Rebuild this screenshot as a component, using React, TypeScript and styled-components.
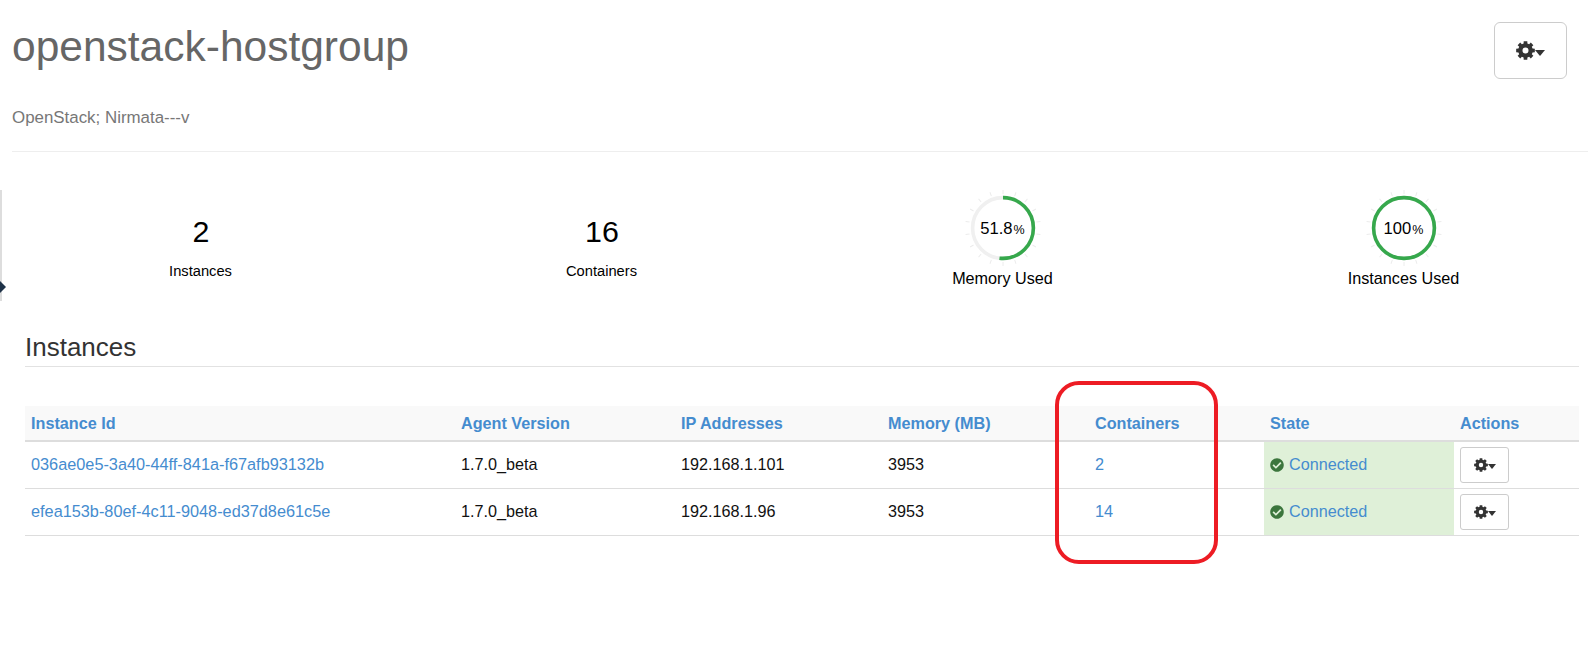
import styled, { createGlobalStyle } from "styled-components";
import { FaCheckCircle } from "react-icons/fa";

const GlobalStyle = createGlobalStyle`
  html, body {
    margin: 0;
    padding: 0;
    background: #fff;
  }
  body {
    font-family: "Liberation Sans", Arial, sans-serif;
    font-size: 16px;
    color: #000;
  }
  * {
    box-sizing: border-box;
  }
`;

const Page = styled.div`
  position: relative;
  width: 1588px;
  height: 648px;
  overflow: hidden;
`;

const Header = styled.header`
  margin-left: 12px;
  padding: 22px 21px 0 0;
  height: 152px;
  border-bottom: 1px solid #eee;
  display: flex;
  justify-content: space-between;
  align-items: flex-start;
`;

const Title = styled.h1`
  margin: 0;
  font-size: 42.5px;
  line-height: 50px;
  font-weight: 400;
  color: #666;
`;

const Subtitle = styled.p`
  margin: 36px 0 0;
  font-size: 16.9px;
  line-height: 20px;
  color: #777;
`;

const GearButton = styled.button<{ $large?: boolean }>`
  display: flex;
  align-items: center;
  justify-content: center;
  width: ${(p) => (p.$large ? "73px" : "49px")};
  height: ${(p) => (p.$large ? "57px" : "36px")};
  padding: 0;
  background: #fff;
  border: 1px solid #ccc;
  border-radius: ${(p) => (p.$large ? "6px" : "3px")};
  color: #333;
`;

const Caret = styled.span<{ $large?: boolean }>`
  width: 0;
  height: 0;
  margin-top: ${(p) => (p.$large ? "5px" : "3px")};
  border-style: solid;
  border-color: #333 transparent transparent;
  border-width: ${(p) => (p.$large ? "6px 5.5px 0" : "5px 4.5px 0")};
`;

const Stats = styled.section`
  display: grid;
  grid-template-columns: repeat(4, 401px);
  height: 170px;
`;

const Stat = styled.div`
  display: flex;
  flex-direction: column;
  align-items: center;
`;

const StatValue = styled.div`
  margin-top: 61px;
  padding-left: 1px;
  font-size: 30.4px;
  line-height: 36px;
`;

const StatLabel = styled.div`
  margin-top: 13px;
  font-size: 14.7px;
  line-height: 18px;
`;

const GaugeBox = styled.div`
  position: relative;
  margin-top: 36px;
  width: 80px;
  height: 80px;
`;

const GaugeText = styled.div`
  position: absolute;
  inset: 1px 0 0;
  display: flex;
  align-items: center;
  justify-content: center;
  font-size: 16.6px;

  small {
    font-size: 12.5px;
    margin-left: 1px;
    margin-top: 2px;
  }
`;

const GaugeLabel = styled.div`
  margin-top: 1px;
  font-size: 16.2px;
  line-height: 18px;
`;

const Instances = styled.section`
  margin: 0 9px 0 25px;
`;

const SectionTitle = styled.h2`
  margin: 0;
  height: 45px;
  padding-top: 10px;
  border-bottom: 1px solid #e2e2e2;
  font-size: 26px;
  line-height: 30px;
  font-weight: 400;
  color: #333;
`;

const Table = styled.table`
  margin-top: 39px;
  width: 100%;
  table-layout: fixed;
  border-collapse: collapse;
`;

const HeadCell = styled.th`
  height: 35px;
  padding: 0 6px;
  text-align: left;
  background: #f9f9f9;
  border-bottom: 2px solid #ddd;
  color: #458ccf;
  font-size: 16.2px;
  font-weight: 700;
`;

const Cell = styled.td<{ $state?: boolean }>`
  height: 47px;
  padding: 0 6px;
  border-bottom: 1px solid #ddd;
  background: ${(p) => (p.$state ? "#dff0d8" : "transparent")};
  font-size: 16.2px;
  color: #111;
`;

const CellLink = styled.a`
  color: #458ccf;
  font-size: 16.3px;
  text-decoration: none;
`;

const StateLabel = styled.span`
  display: flex;
  align-items: center;
  gap: 5px;
  color: #458ccf;

  svg {
    color: #3c763d;
    font-size: 14px;
  }
`;

const Highlight = styled.div`
  position: absolute;
  left: 1055px;
  top: 381px;
  width: 163px;
  height: 183px;
  border: 4.5px solid #ed1c24;
  border-radius: 24px;
  pointer-events: none;
`;

const SideEdge = styled.div`
  position: absolute;
  left: 0;
  top: 190px;
  width: 1.5px;
  height: 111px;
  background: #ddd;
`;

const SideArrow = styled.div`
  position: absolute;
  left: -6px;
  top: 281px;
  width: 12px;
  height: 12px;
  background: #1f3248;
  clip-path: polygon(50% 0, 100% 50%, 50% 100%, 0 50%);
`;

// eight-tooth cog, same shape as the font icon in the original
const cogPath = (() => {
  const point = (radius: number, deg: number) => {
    const a = (deg * Math.PI) / 180;
    return `${(12 + radius * Math.cos(a)).toFixed(2)} ${(12 + radius * Math.sin(a)).toFixed(2)}`;
  };
  const parts: string[] = [];
  for (let i = 0; i < 8; i++) {
    const c = i * 45 - 90;
    parts.push(
      `${i === 0 ? "M" : "L"}${point(9.2, c - 15)}`,
      `L${point(12, c - 11)}`,
      `L${point(12, c + 11)}`,
      `L${point(9.2, c + 15)}`
    );
  }
  return `${parts.join(" ")} Z M12 8.2 A3.8 3.8 0 1 0 12 15.8 A3.8 3.8 0 1 0 12 8.2 Z`;
})();

const Cog = ({ size }: { size: number }) => (
  <svg width={size} height={size} viewBox="0 0 24 24">
    <path d={cogPath} fill="#333" fillRule="evenodd" />
  </svg>
);

const Gauge = ({ percent }: { percent: number }) => {
  const r = 30.4;
  const circumference = 2 * Math.PI * r;
  const ticks = Array.from({ length: 18 }, (_, i) => i * 20);
  return (
    <svg width="80" height="80" viewBox="0 0 80 80">
      {ticks.map((angle) => (
        <line
          key={angle}
          x1="40"
          y1="2"
          x2="40"
          y2="6"
          stroke="#ececec"
          strokeWidth="1"
          transform={`rotate(${angle} 40 40)`}
        />
      ))}
      <circle cx="40" cy="40" r={r} fill="none" stroke="#f0f0f0" strokeWidth="3.6" />
      <circle
        cx="40"
        cy="40"
        r={r}
        fill="none"
        stroke="#36a84c"
        strokeWidth="3.6"
        strokeDasharray={`${(circumference * percent) / 100} ${circumference}`}
        transform="rotate(-90 40 40)"
      />
    </svg>
  );
};

const rows = [
  { id: "036ae0e5-3a40-44ff-841a-f67afb93132b", ip: "192.168.1.101", containers: 2 },
  { id: "efea153b-80ef-4c11-9048-ed37d8e61c5e", ip: "192.168.1.96", containers: 14 },
];

const columnWidths = [430, 220, 207, 207, 175, 190, 125];
const columns = ["Instance Id", "Agent Version", "IP Addresses", "Memory (MB)", "Containers", "State", "Actions"];

export default function App() {
  return (
    <Page>
      <GlobalStyle />
      <Header>
        <div>
          <Title>openstack-hostgroup</Title>
          <Subtitle>OpenStack; Nirmata---v</Subtitle>
        </div>
        <GearButton $large>
          <Cog size={19} />
          <Caret $large />
        </GearButton>
      </Header>

      <Stats>
        <Stat>
          <StatValue>2</StatValue>
          <StatLabel>Instances</StatLabel>
        </Stat>
        <Stat>
          <StatValue>16</StatValue>
          <StatLabel>Containers</StatLabel>
        </Stat>
        <Stat>
          <GaugeBox>
            <Gauge percent={51.8} />
            <GaugeText>
              51.8<small>%</small>
            </GaugeText>
          </GaugeBox>
          <GaugeLabel>Memory Used</GaugeLabel>
        </Stat>
        <Stat>
          <GaugeBox>
            <Gauge percent={100} />
            <GaugeText>
              100<small>%</small>
            </GaugeText>
          </GaugeBox>
          <GaugeLabel>Instances Used</GaugeLabel>
        </Stat>
      </Stats>

      <Instances>
        <SectionTitle>Instances</SectionTitle>
        <Table>
          <colgroup>
            {columnWidths.map((w, i) => (
              <col key={i} width={w} />
            ))}
          </colgroup>
          <thead>
            <tr>
              {columns.map((c) => (
                <HeadCell key={c}>{c}</HeadCell>
              ))}
            </tr>
          </thead>
          <tbody>
            {rows.map((row) => (
              <tr key={row.id}>
                <Cell>
                  <CellLink>{row.id}</CellLink>
                </Cell>
                <Cell>1.7.0_beta</Cell>
                <Cell>{row.ip}</Cell>
                <Cell>3953</Cell>
                <Cell>
                  <CellLink>{row.containers}</CellLink>
                </Cell>
                <Cell $state>
                  <StateLabel>
                    <FaCheckCircle />
                    Connected
                  </StateLabel>
                </Cell>
                <Cell>
                  <GearButton>
                    <Cog size={14} />
                    <Caret />
                  </GearButton>
                </Cell>
              </tr>
            ))}
          </tbody>
        </Table>
      </Instances>

      <Highlight />
      <SideEdge />
      <SideArrow />
    </Page>
  );
}
